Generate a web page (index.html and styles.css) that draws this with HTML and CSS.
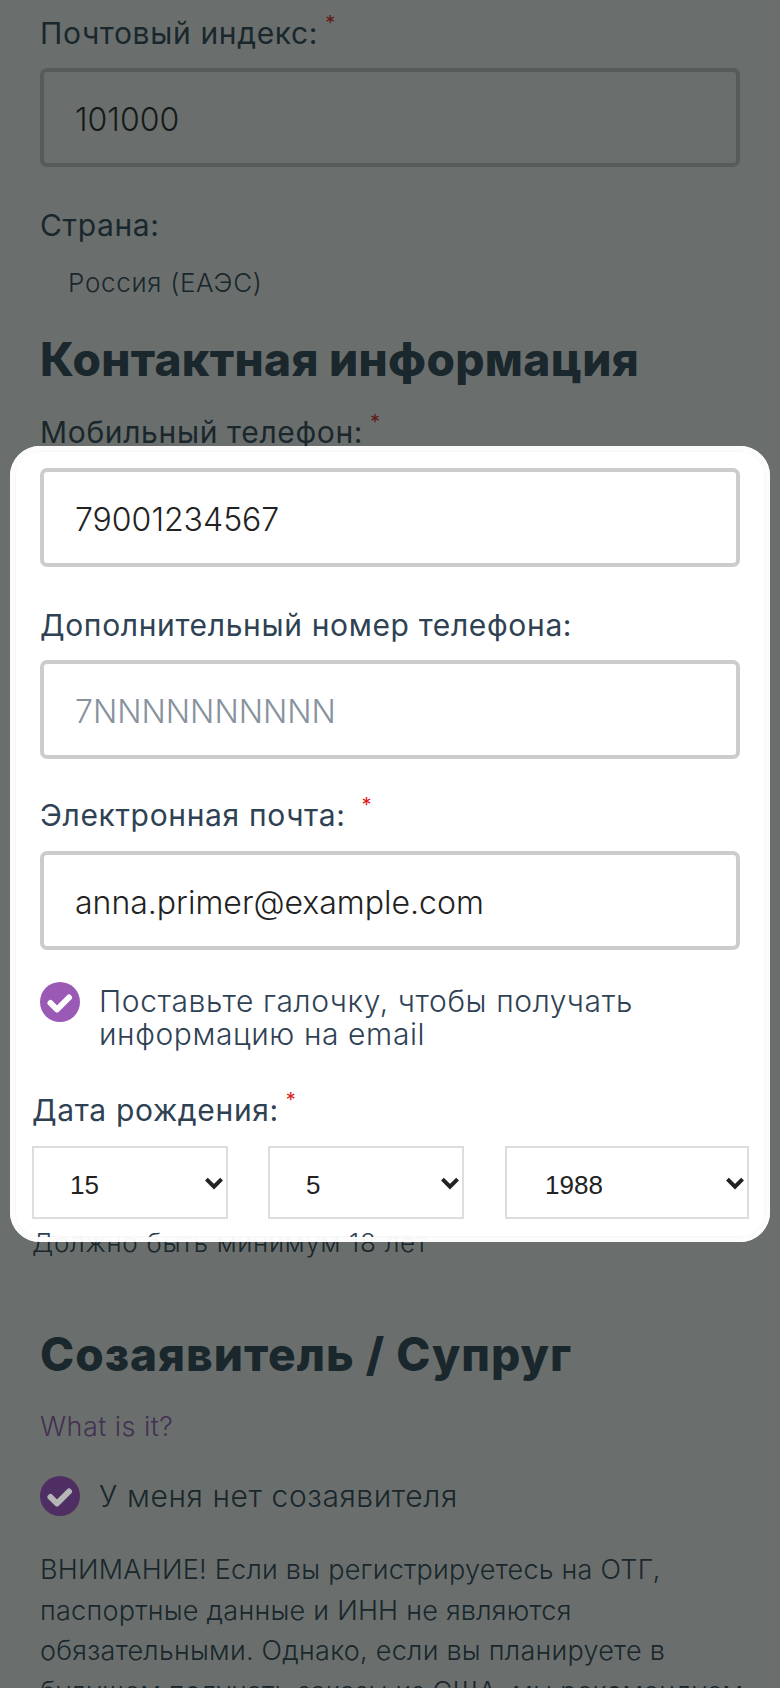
FILE: index.html
```html
<!DOCTYPE html>
<html lang="ru">
<head>
  <meta charset="UTF-8">
  <meta name="viewport" content="width=device-width, initial-scale=1.0">
  <title>Регистрация</title>
  <link rel="stylesheet" href="styles.css">
</head>
<body>
  <div class="container">
    <div class="form-group">
      <label>Почтовый индекс:<span class="req">*</span></label>
      <input type="text" value="101000">
    </div>
    <div class="form-group country">
      <label>Страна:</label>
      <p class="country-name">Россия (ЕАЭС)</p>
    </div>

    <h2>Контактная информация</h2>
    <div class="form-group phone">
      <label>Мобильный телефон:<span class="req">*</span></label>
      <input type="text" value="79001234567">
    </div>
    <div class="form-group phone-extra">
      <label>Дополнительный номер телефона:</label>
      <input type="text" placeholder="7NNNNNNNNNN">
    </div>
    <div class="form-group email">
      <label>Электронная почта:<span class="req far">*</span></label>
      <input type="text" value="anna.primer@example.com">
    </div>
    <div class="check-row">
      <svg class="check" viewBox="0 0 40 40"><circle cx="20" cy="20" r="20"/><path d="M10.5 21l6.5 6.5 12-12"/></svg>
      <span>Поставьте галочку, чтобы получать информацию на email</span>
    </div>

    <div class="birth">
      <label>Дата рождения:<span class="req">*</span></label>
      <div class="birth-selects">
        <div class="select-box">
          <select><option>15</option></select>
          <svg class="chevron" viewBox="0 0 18 12"><path d="M2 2l7 7 7-7"/></svg>
        </div>
        <div class="select-box">
          <select><option>5</option></select>
          <svg class="chevron" viewBox="0 0 18 12"><path d="M2 2l7 7 7-7"/></svg>
        </div>
        <div class="select-box year">
          <select><option>1988</option></select>
          <svg class="chevron" viewBox="0 0 18 12"><path d="M2 2l7 7 7-7"/></svg>
        </div>
      </div>
      <p class="hint">Должно быть минимум 18 лет</p>
    </div>

    <h2 class="spouse">Созаявитель / Супруг</h2>
    <a class="what" href="#">What is it?</a>
    <div class="check-row single">
      <svg class="check dim" viewBox="0 0 40 40"><circle cx="20" cy="20" r="20"/><path d="M10.5 21l6.5 6.5 12-12"/></svg>
      <span>У меня нет созаявителя</span>
    </div>
    <p class="notice">ВНИМАНИЕ! Если вы регистрируетесь на ОТГ, паспортные данные и ИНН не являются обязательными. Однако, если вы планируете в будущем получать заказы из США, мы рекомендуем</p>
  </div>

  <div class="spotlight"></div>
</body>
</html>
```

FILE: styles.css
```css
html, body {
  height: 1688px;
  overflow: hidden;
}
body {
  font-family: Inter, "Noto Sans", sans-serif;
  font-weight: 300;
  margin: 0;
  padding: 0;
  background-color: #fff;
  color: #2f4254;
}
.container {
  position: relative;
  height: 1688px;
  box-sizing: border-box;
  padding: 13px 40px 0;
  overflow: hidden;
}
.form-group {
  margin-bottom: 38px;
}
label {
  display: block;
  height: 40px;
  line-height: 40px;
  margin-bottom: 15px;
  font-size: 30px;
  font-weight: 400;
  letter-spacing: 0.65px;
}
.req {
  position: relative;
  top: -14px;
  margin-left: 7px;
  font-size: 20px;
  color: #e02020;
}
.req.far {
  margin-left: 16px;
}
input {
  display: block;
  box-sizing: border-box;
  width: 100%;
  height: 99px;
  padding: 4px 31px 0;
  border: 4px solid #ccc;
  border-radius: 7px;
  background: #fff;
  font-family: inherit;
  font-weight: 300;
  font-size: 32px;
  color: #222;
}
input::placeholder {
  color: #87929e;
  opacity: 1;
}
.country {
  margin-bottom: 28px;
}
.country label {
  margin-bottom: 18px;
}
.country-name {
  margin: 0 0 0 28px;
  line-height: 40px;
  font-size: 26px;
  letter-spacing: 0.7px;
}
h2 {
  margin: 0 0 25px;
  line-height: 56px;
  font-size: 46px;
  font-weight: 800;
  letter-spacing: 0.3px;
}
.phone label {
  margin-bottom: 16px;
}
.phone-extra {
  margin-bottom: 36px;
}
.email {
  margin-bottom: 32px;
}
.email label {
  margin-bottom: 16px;
}
.check-row {
  display: flex;
  gap: 19px;
  font-size: 30px;
  font-weight: 300;
  line-height: 33px;
  letter-spacing: 0.6px;
}
.check-row span {
  padding-top: 3px;
}
.check {
  flex: none;
  width: 40px;
  height: 40px;
}
.check circle {
  fill: #9b59b6;
}
.check path {
  fill: none;
  stroke: #fff;
  stroke-width: 6;
  stroke-linecap: round;
  stroke-linejoin: round;
}
/* this one stays brighter than the dimmed page, so it sits over the overlay */
.check.dim {
  position: relative;
  z-index: 2;
}
.check.dim circle {
  fill: #4f2e63;
}
.check.dim path {
  stroke: #b4b7b6;
}
.birth {
  margin: 39px -33px 0 -8px;
}
.birth label {
  margin-bottom: 16px;
}
.birth-selects {
  display: flex;
  gap: 40px;
}
.select-box {
  position: relative;
  width: 196px;
}
.select-box.year {
  margin-left: 1px;
  width: 244px;
}
select {
  display: block;
  width: 100%;
  height: 73px;
  box-sizing: border-box;
  padding: 4px 36px 0;
  border: 2px solid #ddd;
  border-radius: 0;
  background: #fff;
  font-family: "Liberation Sans", Arial, sans-serif;
  font-size: 26px;
  color: #222;
  appearance: none;
}
.select-box.year select {
  padding-left: 38px;
}
.chevron {
  position: absolute;
  top: 31px;
  right: 4px;
  width: 20px;
  height: 13px;
  pointer-events: none;
}
.chevron path {
  fill: none;
  stroke: #222;
  stroke-width: 3.6;
}
.hint {
  margin: 4px 0 0;
  line-height: 40px;
  font-size: 26px;
  letter-spacing: 0.7px;
}
.spouse {
  margin: 63px 0 0;
  letter-spacing: 1px;
}
.what {
  display: block;
  margin-top: 25px;
  line-height: 40px;
  font-size: 27px;
  letter-spacing: 0.45px;
  color: #9b59b6;
  text-decoration: none;
}
.single {
  margin-top: 29px;
  align-items: center;
}
.single span {
  padding-top: 0;
}
.notice {
  margin: 34px -12px 0 0;
  line-height: 40.5px;
  font-size: 27px;
  letter-spacing: 0.25px;
}
/* transparent window with the dimmed page around it */
.spotlight {
  position: absolute;
  top: 446px;
  left: 10px;
  width: 760px;
  height: 796px;
  box-sizing: border-box;
  border: 5px solid rgba(252, 252, 252, 0.97);
  border-radius: 30px;
  box-shadow: 0 0 0 2000px rgba(14, 22, 20, 0.62), inset 0 0 0 1px rgba(0, 0, 0, 0.03);
}
```
